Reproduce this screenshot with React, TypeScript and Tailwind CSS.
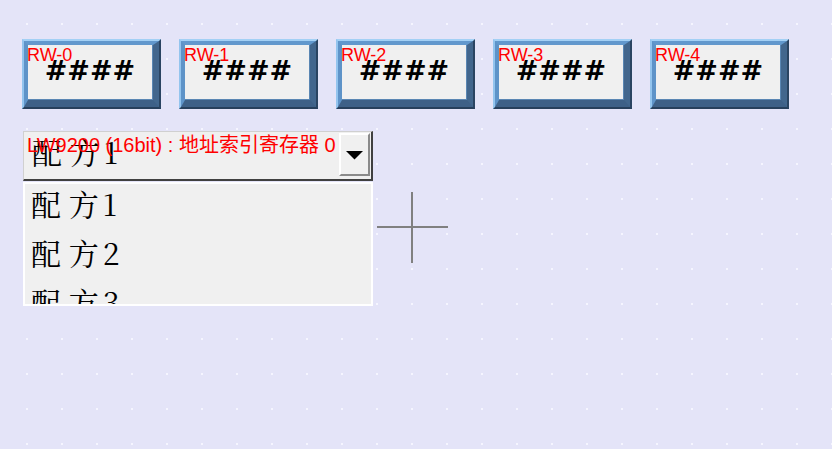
import React from "react";

const SANS = "font-['Liberation_Sans','Noto_Sans_CJK_SC',sans-serif]";
const SERIF = "font-['Noto_Serif_CJK_SC','Liberation_Serif','Noto_Sans_CJK_SC',serif]";

function RwButton({ label }: { label: string }) {
  return (
    <div className="relative w-[139px] h-[70px] flex border-t-2 border-l-2 border-r-2 border-b-2 border-t-[#a3d0f5] border-l-[#93c4ee] border-r-[#2a4462] border-b-[#273f5c]">
      <div className="flex-1 flex border-t-[4px] border-l-[4px] border-r-[6px] border-b-[7px] border-t-[#6298cd] border-l-[#5e93c8] border-r-[#42668d] border-b-[#3e6087]">
        <div className="flex-1 flex items-center justify-center bg-[#f0f0f0] border-r border-b border-r-[#5a86b3] border-b-[#5a86b3] pb-[4px]">
          <span className="font-['DejaVu_Sans',sans-serif] text-[27px] leading-none font-bold text-black">####</span>
        </div>
      </div>
      <span className={`${SANS} absolute left-[3px] top-[5px] text-[18px] leading-none text-[#ff0000]`}>{label}</span>
    </div>
  );
}

function Recipe({ name, num }: { name: string; num: string }) {
  return (
    <>
      <span>{name}</span>
      <span className="ml-[4px]">{num}</span>
    </>
  );
}

export default function App() {
  return (
    <div className="relative w-[832px] h-[449px] overflow-hidden bg-[#e4e4f8] bg-[radial-gradient(circle_at_1px_1px,#f6f6ff_0.7px,transparent_1px)] bg-[length:35px_35px] bg-[position:26px_23px]">
      <div className="flex gap-[18px] pl-[22px] pt-[39px]">
        {["RW-0", "RW-1", "RW-2", "RW-3", "RW-4"].map((l) => (
          <RwButton key={l} label={l} />
        ))}
      </div>

      <div className="w-[350px] ml-[23px] mt-[22px]">
        <div className="relative h-[50px] flex justify-between bg-[#f0f0f0] border-t border-l border-t-[#d0d0d0] border-l-[#d0d0d0] border-r-2 border-b-2 border-r-[#404040] border-b-[#404040]">
          <div className={`${SERIF} text-[30px] leading-[36px] pl-[8px] pt-[1px] text-black whitespace-nowrap`}>
            <Recipe name="配 方" num="1" />
          </div>
          <div className="w-[31px] h-[43px] mt-[1px] mr-[1px] flex items-center justify-center bg-[#f0f0f0] border-t-2 border-l-2 border-t-white border-l-white border-r-2 border-b-2 border-r-[#8a8a8a] border-b-[#8a8a8a]">
            <svg width="17" height="9" viewBox="0 0 17 9" className="mt-[2px]">
              <polygon points="0,0 17,0 8.5,8.5" fill="#000" />
            </svg>
          </div>
          <div className={`${SANS} absolute left-[3px] top-[3px] text-[20px] leading-none text-[#ff0000] whitespace-nowrap`}>
            LW9200 (16bit) : 地址索引寄存器 0
          </div>
        </div>
        <div className="mt-[1px] h-[124px] border-2 border-white bg-[#f0f0f0] overflow-hidden">
          <div className="-mt-[5px]">
            {["1", "2", "3"].map((n) => (
              <div key={n} className={`${SERIF} h-[49px] text-[30px] leading-[49px] pl-[6px] text-black whitespace-nowrap`}>
                <Recipe name="配 方" num={n} />
              </div>
            ))}
          </div>
        </div>
      </div>

      <div className="absolute left-[377px] top-[226px] w-[71px] h-[2px] bg-[#808080]" />
      <div className="absolute left-[411px] top-[192px] w-[2px] h-[71px] bg-[#808080]" />
    </div>
  );
}
